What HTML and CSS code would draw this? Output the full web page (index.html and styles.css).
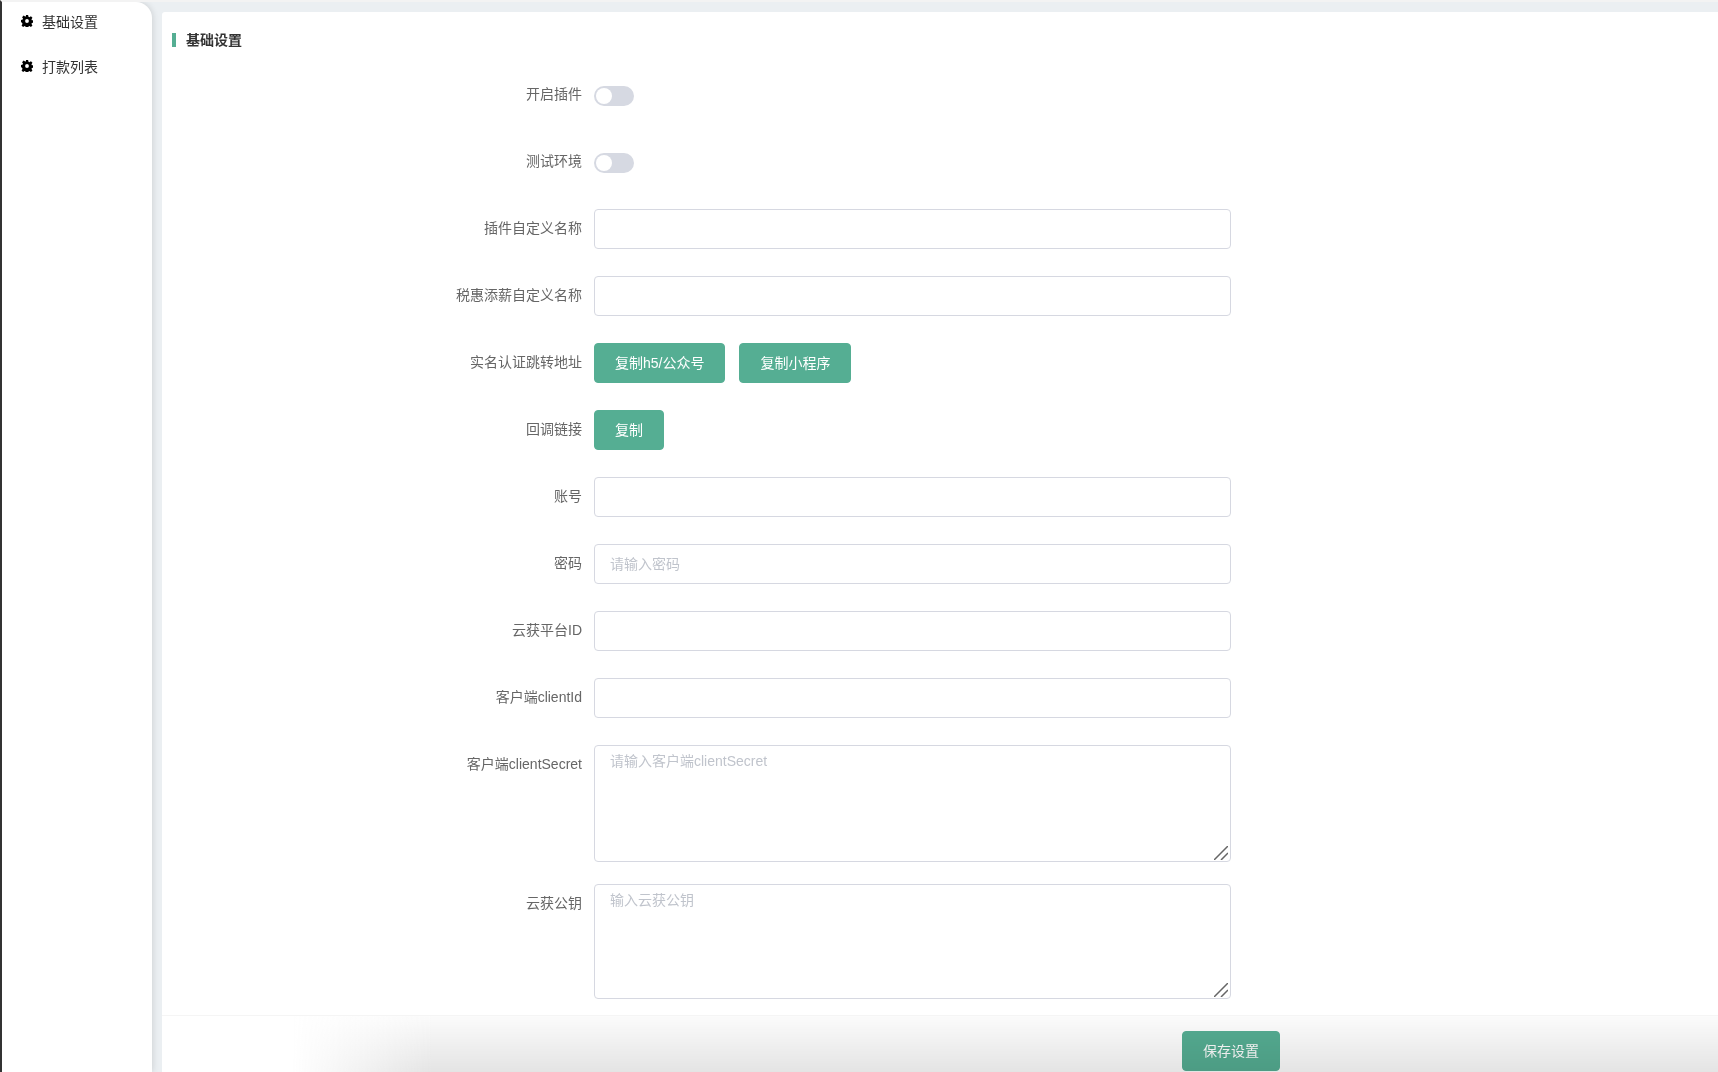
FILE: index.html
```html
<!DOCTYPE html>
<html lang="en">
<head>
  <meta charset="UTF-8">
  <meta name="viewport" content="width=device-width, initial-scale=1.0">
  <title>基础设置</title>
  <link rel="stylesheet" href="styles.css">
</head>
<body>
  <svg class="icon-defs" width="0" height="0" aria-hidden="true">
    <symbol id="icon-cog" viewBox="1 1 22 22">
      <path fill-rule="evenodd" d="M10 1h4l.7 3.200 1.700.7 2.800-1.800 2.800 2.800-1.800 2.800.7 1.700 3.100.6v4l-3.100.7-.7 1.700 1.800 2.800-2.800 2.800-2.800-1.800-1.700.7-.7 3.100h-4l-.7-3.100-1.700-.7-2.800 1.800-2.800-2.800 1.800-2.800-.7-1.700L1 14v-4l3.100-.6.7-1.700L3 4.900l2.800-2.800 2.800 1.800 1.700-.7zM12 8.500a3.500 3.500 0 1 0 0 7 3.500 3.500 0 0 0 0-7z"/>
    </symbol>
    <symbol id="icon-grip" viewBox="0 0 14 14">
      <path d="M0 14 14 0M7 14l7-7" fill="none" stroke="#666" stroke-width="1.500"/>
    </symbol>
  </svg>

  <aside class="sidebar">
    <a class="side-item"><svg class="cog"><use href="#icon-cog"></use></svg>基础设置</a>
    <a class="side-item"><svg class="cog"><use href="#icon-cog"></use></svg>打款列表</a>
  </aside>

  <main class="main">
    <h2 class="title">基础设置</h2>

    <form class="form">
      <div class="form-group">
        <label>开启插件</label>
        <span class="switch"></span>
      </div>
      <div class="form-group">
        <label>测试环境</label>
        <span class="switch"></span>
      </div>
      <div class="form-group">
        <label>插件自定义名称</label>
        <input type="text">
      </div>
      <div class="form-group">
        <label>税惠添薪自定义名称</label>
        <input type="text">
      </div>
      <div class="form-group">
        <label>实名认证跳转地址</label>
        <button type="button" class="btn">复制h5/公众号</button>
        <button type="button" class="btn">复制小程序</button>
      </div>
      <div class="form-group">
        <label>回调链接</label>
        <button type="button" class="btn">复制</button>
      </div>
      <div class="form-group">
        <label>账号</label>
        <input type="text">
      </div>
      <div class="form-group">
        <label>密码</label>
        <input type="text" placeholder="请输入密码">
      </div>
      <div class="form-group">
        <label>云获平台ID</label>
        <input type="text">
      </div>
      <div class="form-group">
        <label>客户端clientId</label>
        <input type="text">
      </div>
      <div class="form-group form-group-area">
        <label>客户端clientSecret</label>
        <div class="area-wrap">
          <textarea placeholder="请输入客户端clientSecret"></textarea>
          <svg class="grip"><use href="#icon-grip"></use></svg>
        </div>
      </div>
      <div class="form-group form-group-area">
        <label>云获公钥</label>
        <div class="area-wrap">
          <textarea placeholder="输入云获公钥"></textarea>
          <svg class="grip"><use href="#icon-grip"></use></svg>
        </div>
      </div>
    </form>

    <div class="footer">
      <button type="button" class="btn btn-save">保存设置</button>
    </div>
  </main>
</body>
</html>
```

FILE: styles.css
```css
* {
  box-sizing: border-box;
}

html, body {
  height: 100%;
}

body {
  display: flex;
  margin: 0;
  height: 100vh;
  overflow: hidden;
  border-left: 2px solid #333;
  border-top: 2px solid #f3f3f3;
  background: #ebeff2;
  font-family: "Liberation Sans", "Noto Sans CJK SC", sans-serif;
  font-size: 14px;
  color: #666;
}

.icon-defs {
  position: absolute;
}

.sidebar {
  flex: 0 0 150px;
  background: #fff;
  border-top-right-radius: 16px;
  box-shadow: 1px 0 6px rgba(0, 0, 0, 0.12);
}

.side-item {
  display: flex;
  align-items: center;
  height: 37px;
  margin-bottom: 8px;
  padding-left: 19px;
  color: #333;
}

.cog {
  width: 12px;
  height: 12px;
  margin-right: 9px;
  fill: #000;
}

.main {
  position: relative;
  flex: 1;
  margin: 10px 0 0 10px;
  background: #fff;
  overflow: hidden;
  border-top-left-radius: 3px;
}

.title {
  position: relative;
  margin: 0;
  padding-left: 24px;
  height: 63px;
  line-height: 56px;
  font-size: 14px;
  font-weight: bold;
  color: #333;
}

.title::before {
  content: "";
  position: absolute;
  left: 10px;
  top: 21px;
  width: 4px;
  height: 14px;
  background: #55ae93;
}

.form-group {
  display: flex;
  align-items: flex-start;
  margin-bottom: 27px;
  min-height: 40px;
}

.form-group label {
  flex: 0 0 432px;
  padding-right: 12px;
  line-height: 39px;
  text-align: right;
}

.form-group input,
.form-group textarea {
  display: block;
  width: 637px;
  border: 1px solid #d6d8e1;
  border-radius: 4px;
  padding: 0 15px;
  background: #fff;
  font-family: inherit;
  font-size: 14px;
  color: #666;
  outline: none;
}

.form-group input {
  height: 40px;
}

.form-group textarea {
  height: 117px;
  padding-top: 5px;
  padding-bottom: 5px;
  line-height: 20px;
  resize: none;
}

.form-group-area {
  margin-bottom: 22px;
}

.form-group-area:last-child textarea {
  height: 115px;
}

.area-wrap {
  position: relative;
}

.grip {
  position: absolute;
  right: 3px;
  bottom: 2px;
  width: 14px;
  height: 14px;
}

input::placeholder,
textarea::placeholder {
  color: #c0c4cc;
}

.switch {
  position: relative;
  display: block;
  width: 40px;
  height: 20px;
  margin-top: 11px;
  border-radius: 10px;
  background: #d6d9e2;
}

.switch::after {
  content: "";
  position: absolute;
  left: 2px;
  top: 2px;
  width: 16px;
  height: 16px;
  border-radius: 50%;
  background: #fff;
}

.btn {
  height: 40px;
  padding: 0 20px 2px;
  border: 1px solid #55ae93;
  border-radius: 4px;
  background: #55ae93;
  font-family: inherit;
  font-size: 14px;
  color: #fff;
  cursor: pointer;
}

.btn + .btn {
  margin-left: 14px;
}

.footer {
  position: absolute;
  left: 0;
  right: 0;
  bottom: 0;
  height: 57px;
  padding: 15px 0 0 1020px;
  background: #fff;
  border-top: 1px solid #f5f5f5;
}

.footer::after {
  content: "";
  position: absolute;
  inset: 0;
  background:
    linear-gradient(to right, #fff 130px, rgba(255, 255, 255, 0) 270px),
    linear-gradient(rgba(0, 0, 0, 0.015), rgba(0, 0, 0, 0.105));
  mix-blend-mode: multiply;
  pointer-events: none;
}

.btn-save {
  width: 98px;
  padding: 0 0 2px;
}
```
